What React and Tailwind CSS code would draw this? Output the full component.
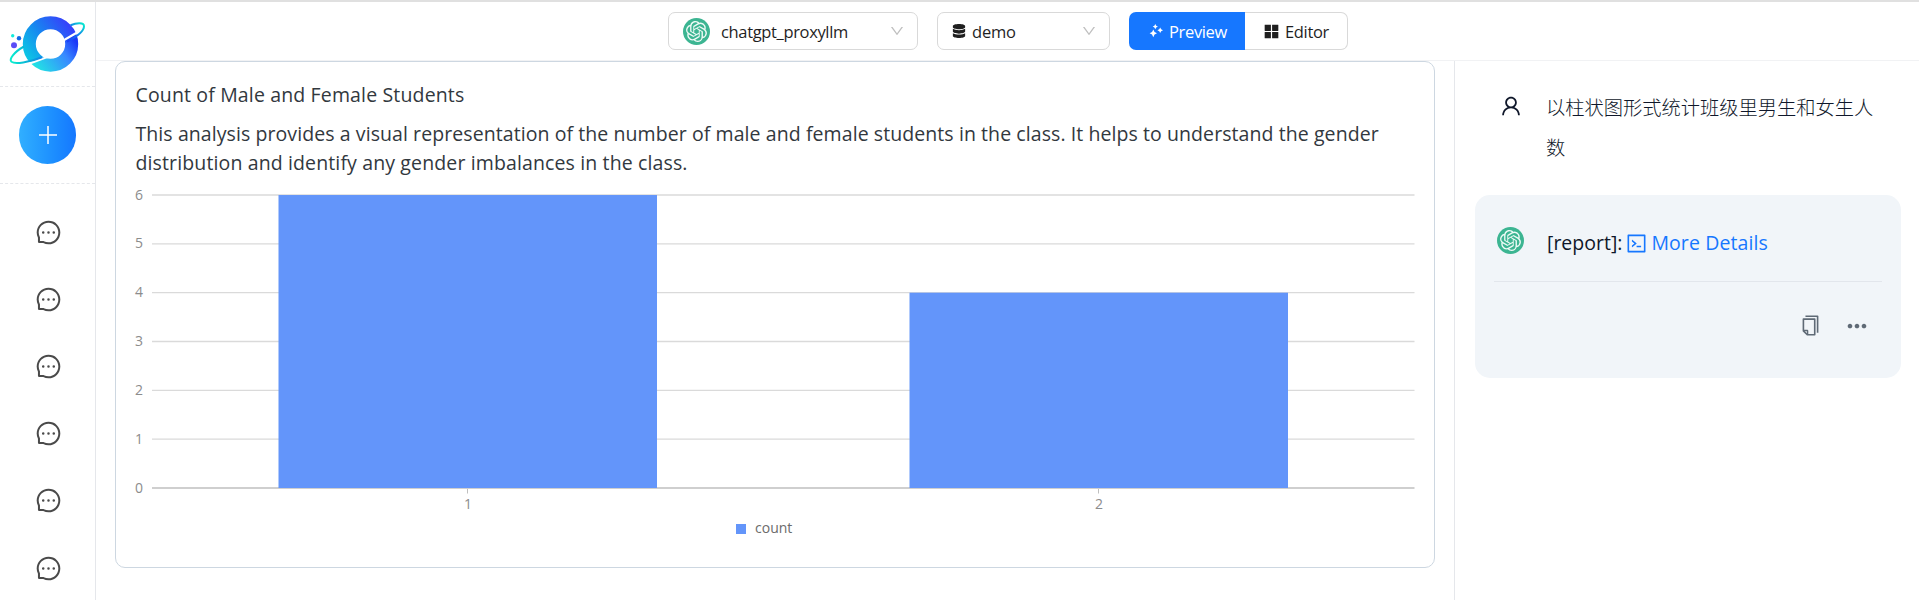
import {
  AiOutlineMessage,
  AiOutlineDown,
  AiOutlineUser,
  AiOutlineCode,
  AiOutlineCopy,
  AiFillAppstore,
} from "react-icons/ai";
import { FaDatabase } from "react-icons/fa";
import { MdMoreHoriz } from "react-icons/md";
import { SiOpenai } from "react-icons/si";

const data = [
  { name: "1", count: 6 },
  { name: "2", count: 4 },
];

function Logo() {
  return (
    <svg width="95" height="84" viewBox="0 2 95 84" fill="none">
      <defs>
        <linearGradient id="upper" gradientUnits="userSpaceOnUse" x1="26" y1="58" x2="72" y2="24">
          <stop offset="0" stopColor="#0cc8e4" />
          <stop offset="0.45" stopColor="#1688f0" />
          <stop offset="1" stopColor="#3a3afc" />
        </linearGradient>
        <linearGradient id="lower" gradientUnits="userSpaceOnUse" x1="38" y1="70" x2="76" y2="42">
          <stop offset="0" stopColor="#22e2e4" />
          <stop offset="0.65" stopColor="#3889ff" />
          <stop offset="1" stopColor="#1c38f8" />
        </linearGradient>
        <linearGradient id="orbitLeft" gradientUnits="userSpaceOnUse" x1="12" y1="60" x2="46" y2="56">
          <stop offset="0" stopColor="#08ecce" />
          <stop offset="0.5" stopColor="#0aa8d8" />
          <stop offset="1" stopColor="#1478f0" />
        </linearGradient>
        <linearGradient id="orbitRight" gradientUnits="userSpaceOnUse" x1="66" y1="42" x2="85" y2="25">
          <stop offset="0" stopColor="#1c38f8" />
          <stop offset="0.5" stopColor="#1472ee" />
          <stop offset="1" stopColor="#08ecce" />
        </linearGradient>
        <clipPath id="above">
          <path d="M0 0H95V21L74 33L64.500 38.500L46 56.500L31 61.500L0 70Z" />
        </clipPath>
        <clipPath id="below">
          <path d="M0 90L30 64.500L49 57.500L64.500 41L76 34.500L95 20V90Z" />
        </clipPath>
      </defs>
      <circle cx="50.500" cy="44" r="21.200" stroke="url(#upper)" strokeWidth="13" clipPath="url(#above)" />
      <circle cx="50.500" cy="44" r="21.200" stroke="url(#lower)" strokeWidth="13" clipPath="url(#below)" />
      <path d="M24 46.500C14 52 8.500 59.500 11.500 61.800C15 64.200 29 62.500 42 57.300" stroke="url(#orbitLeft)" strokeWidth="2" />
      <path d="M70.500 25.200C77 22.600 84 22.400 84 26.200C84 30.500 77 36.500 67 41.500" stroke="url(#orbitRight)" strokeWidth="2" />
      <circle cx="12.700" cy="35.700" r="1.700" fill="#12ecdc" />
      <circle cx="19" cy="38.300" r="2.200" fill="#1268e6" />
      <circle cx="14" cy="45.200" r="3" fill="#5a4cf6" />
    </svg>
  );
}

function Badge() {
  return (
    <span className="flex h-[27px] w-[27px] shrink-0 items-center justify-center rounded-full bg-[#3cb592] text-[#eefaf6]">
      <SiOpenai size={21} />
    </span>
  );
}

function Sparkles() {
  return (
    <svg width="14" height="14" viewBox="0 0 14 14" fill="currentColor">
      <path d="M4.300 5.400Q5 8.600 8 9.300Q5 10 4.300 13.200Q3.600 10 0.600 9.300Q3.600 8.600 4.300 5.400Z" />
      <path d="M6.300 0Q6.800 2.100 8.900 2.600Q6.800 3.100 6.300 5.200Q5.800 3.100 3.700 2.600Q5.800 2.100 6.300 0Z" />
      <path d="M11.200 3.400Q11.700 5.700 14 6.200Q11.700 6.700 11.200 9Q10.700 6.700 8.400 6.200Q10.700 5.700 11.200 3.400Z" />
    </svg>
  );
}

function Chart() {
  const bottom = 311;
  const unit = 48.83;
  return (
    <svg width="1318" height="390" viewBox="0 0 1318 390" className="block">
      {[0, 1, 2, 3, 4, 5, 6].map((n) => (
        <g key={n}>
          <line x1="36" x2="1298.500" y1={bottom - n * unit} y2={bottom - n * unit} stroke={n ? "#dadada" : "#bfbfbf"} strokeWidth={n ? 1.3 : 1.5} />
          <text x="27" y={bottom - n * unit + 4.5} textAnchor="end" fontSize="14" fill="#8c8c8c">{n}</text>
        </g>
      ))}
      {data.map((d, i) => (
        <g key={d.name}>
          <rect x={162.5 + i * 631} y={bottom - d.count * unit} width="378.500" height={d.count * unit} fill="#6395fa" />
          <line x1={351.5 + i * 631} x2={351.5 + i * 631} y1="312" y2="316.500" stroke="#bfbfbf" />
          <text x={352 + i * 631} y="332" textAnchor="middle" fontSize="14" fill="#8c8c8c">{d.name}</text>
        </g>
      ))}
      <rect x="620" y="347" width="10" height="10" fill="#6395fa" />
      <text x="639" y="356" fontSize="14" fill="#6b6b6b">count</text>
    </svg>
  );
}

export default function App() {
  return (
    <div className="flex h-[600px] w-full flex-col overflow-hidden border-t-2 border-[#e0e0e0] bg-white font-['Open_Sans','Noto_Sans_CJK_SC',sans-serif]">
      <div className="flex min-h-0 flex-1">
        <aside className="flex w-24 shrink-0 flex-col border-r border-[#e5e7eb]">
          <div className="h-[85px] shrink-0 border-b border-dashed border-[#e5e7eb]">
            <Logo />
          </div>
          <div className="flex h-[97px] shrink-0 items-center justify-center border-b border-dashed border-[#e5e7eb]">
            <button className="flex h-[58px] w-[57px] items-center justify-center rounded-full bg-linear-to-r from-[#31afff] to-[#1677ff]">
              <svg width="18" height="18" viewBox="0 0 18 18" stroke="white" strokeWidth="1.500">
                <path d="M9 0V18M0 9H18" />
              </svg>
            </button>
          </div>
          <nav className="flex shrink-0 flex-col pt-[14.500px]">
            {[0, 1, 2, 3, 4, 5].map((n) => (
              <span key={n} className="flex h-[67.200px] shrink-0 items-center justify-center pl-px text-[#4a4a4a]">
                <AiOutlineMessage size={27} />
              </span>
            ))}
          </nav>
        </aside>

        <div className="flex min-w-0 flex-1 flex-col">
          <header className="flex h-[59px] shrink-0 items-center border-b border-[#f1f2f4] pl-[572px] text-[16.500px] tracking-[-0.350px] text-[#1f1f1f]">
            <div className="flex h-[38px] w-[250px] items-center rounded-[7px] border border-[#d9d9d9] pr-[12px] pl-[14px]">
              <Badge />
              <span className="ml-[11px] flex-1 pt-[2px]">chatgpt_proxyllm</span>
              <AiOutlineDown size={16} className="text-[#bfbfbf]" />
            </div>
            <div className="ml-[19px] flex h-[38px] w-[173px] items-center rounded-[7px] border border-[#d9d9d9] pr-[12px] pl-[14px]">
              <FaDatabase size={14} />
              <span className="ml-[6px] flex-1 pt-[2px] tracking-[-0.200px]">demo</span>
              <AiOutlineDown size={16} className="text-[#bfbfbf]" />
            </div>
            <div className="ml-[19px] flex h-[38px] w-[116px] items-center rounded-l-[7px] bg-[#1677ff] pl-[20px] text-white">
              <Sparkles />
              <span className="ml-[6px] pt-[2px]">Preview</span>
            </div>
            <div className="flex h-[38px] w-[103px] items-center rounded-r-[7px] border border-l-0 border-[#d9d9d9] pl-[17px]">
              <AiFillAppstore size={19} />
              <span className="ml-[4px] pt-[2px]">Editor</span>
            </div>
          </header>

          <div className="flex min-h-0 flex-1">
            <main className="w-[1358px] shrink-0 pl-[19px]">
              <section className="h-[507px] w-[1320px] rounded-[10px] border border-[#cdd7e1]">
                <div className="pt-[18px] pl-[19.500px] text-[19.500px] leading-[29px] tracking-[0.080px] text-[#32383e]">
                  <h2 className="tracking-[0.150px]">Count of Male and Female Students</h2>
                  <p className="mt-[10px] w-[1270px]">
                    This analysis provides a visual representation of the number of male and female students in the class. It helps to understand the gender <span className="tracking-[0.130px]">distribution and identify any gender imbalances in the class.</span>
                  </p>
                </div>
                <Chart />
              </section>
            </main>

            <aside className="flex-1 border-l border-[#e5e7eb] pr-[18px] pl-[20px] text-[19.500px] text-[#0f172a]">
              <div className="flex pt-[27px] pl-[24px]">
                <AiOutlineUser size={24} className="mt-[6px]" />
                <p className="ml-[23px] w-[340px] text-[19.250px] leading-[39.500px] font-light">以柱状图形式统计班级里男生和女生人数</p>
              </div>
              <div className="mt-[28px] h-[183px] rounded-[15px] bg-[#f1f5f9] px-[19px]">
                <div className="flex h-[87px] border-b border-[#e2e6ec] pt-[32px] pl-[3px]">
                  <Badge />
                  <div className="ml-[23px] flex h-[32px] items-center">
                    <span>[report]:</span>
                    <AiOutlineCode size={23} className="ml-[3px] text-[#1677ff]" />
                    <span className="ml-[3px] tracking-[0.100px] text-[#1677ff]">More Details</span>
                  </div>
                </div>
                <div className="flex h-[87px] items-center justify-end gap-[21px] pr-[11px] text-[#5f6a76]">
                  <AiOutlineCopy size={23} />
                  <MdMoreHoriz size={28} />
                </div>
              </div>
            </aside>
          </div>
        </div>
      </div>
    </div>
  );
}
